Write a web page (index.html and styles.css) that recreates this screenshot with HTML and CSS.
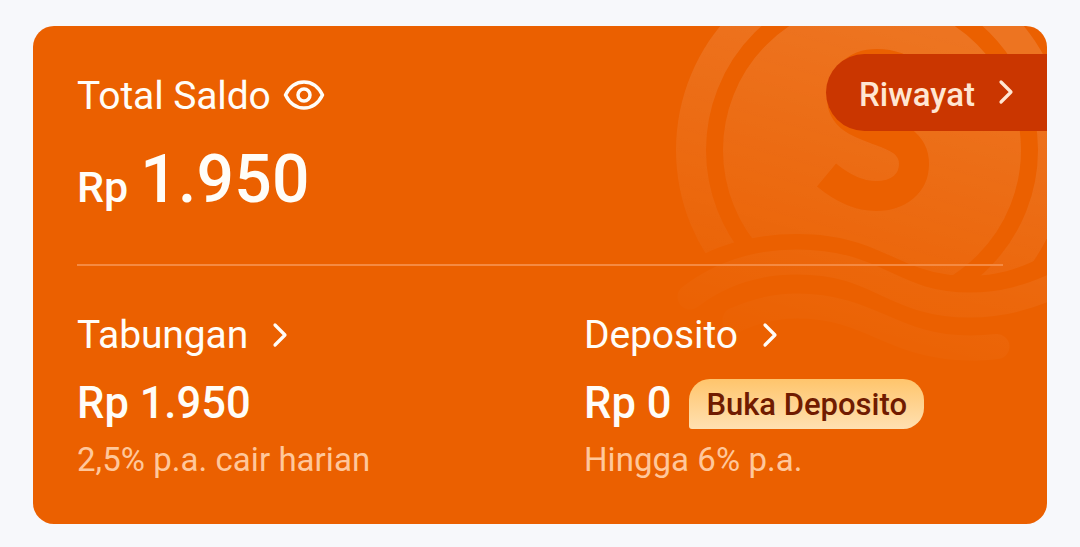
FILE: index.html
```html
<!DOCTYPE html>
<html lang="id">

<head>
    <meta charset="UTF-8">
    <meta name="viewport" content="width=device-width, initial-scale=1.0">
    <title>Total Saldo</title>
    <link rel="stylesheet" href="styles.css">
</head>

<body>
    <main class="card">
        <!-- Coin and waves behind the content -->
        <svg class="card-art" width="400" height="360" viewBox="647 26 400 360" aria-hidden="true">
            <defs>
                <linearGradient id="fade" gradientUnits="userSpaceOnUse" x1="910" y1="26" x2="820" y2="350">
                    <stop offset="0" stop-color="#fff" stop-opacity="0.13" />
                    <stop offset="1" stop-color="#fff" stop-opacity="0.01" />
                </linearGradient>
                <clipPath id="above-wave">
                    <path d="M647 0 V284 L704 254 C732 240 766 234 797 234 C883 234 898 276 970 276 C1002 276 1027 266 1060 248 V0 Z" />
                </clipPath>
                <mask id="coin-mask" maskUnits="userSpaceOnUse" x="647" y="0" width="440" height="386">
                    <rect x="647" y="0" width="440" height="386" fill="#fff" />
                    <circle cx="872" cy="150" r="157.5" fill="none" stroke="#000" stroke-width="17" />
                    <path d="M826.500 175 C841 187 857 196 876 196 C899 196 914 183 914 164 C914 122 842 137 842 98 C842 77 856 64 877 64 C891 64 904 69 915 78" fill="none" stroke="#000" stroke-width="30" />
                </mask>
            </defs>
            <g clip-path="url(#above-wave)">
                <circle cx="872" cy="150" r="196" fill="url(#fade)" mask="url(#coin-mask)" />
            </g>
            <g fill="none" stroke="url(#fade)" stroke-width="25" stroke-linecap="round">
                <path d="M690 297 C721 273 757 262 797 262 C880 262 891 305 970 305 C1003 305 1030 297 1060 283" />
                <path d="M735 320 C755 311 776 306 797 306 C872 306 892 348 970 348 Q985 348 997 346.500" />
            </g>
        </svg>

        <a class="history" href="#">
            <span>Riwayat</span>
            <svg class="chevron" width="16" height="26" viewBox="0 0 16 26"><path d="M3 3 L13 13 L3 23" /></svg>
        </a>

        <section class="total">
            <div class="title">
                <h1>Total Saldo</h1>
                <svg class="eye" width="42" height="32" viewBox="0 0 42 32">
                    <path d="M2.500 16 C6.500 8 13 3 21 3 S35.500 8 39.500 16 C35.500 24 29 29 21 29 S6.500 24 2.500 16 Z" />
                    <circle cx="21" cy="16" r="6" />
                </svg>
            </div>
            <p class="balance"><span class="currency">Rp</span><span class="number">1.950</span></p>
        </section>

        <div class="accounts">
            <section class="account">
                <div class="title">
                    <h2>Tabungan</h2>
                    <svg class="chevron" width="16" height="26" viewBox="0 0 16 26"><path d="M3 3 L13 13 L3 23" /></svg>
                </div>
                <div class="amount">Rp 1.950</div>
                <p class="note">2,5% p.a. cair harian</p>
            </section>
            <section class="account">
                <div class="title">
                    <h2>Deposito</h2>
                    <svg class="chevron" width="16" height="26" viewBox="0 0 16 26"><path d="M3 3 L13 13 L3 23" /></svg>
                </div>
                <div class="amount">Rp 0 <span class="badge">Buka Deposito</span></div>
                <p class="note">Hingga 6% p.a.</p>
            </section>
        </div>
    </main>
</body>

</html>
```
FILE: styles.css
```css
* {
    box-sizing: border-box;
}

body {
    margin: 0;
    padding: 26px 33px 23px;
    background-color: #f7f8fb;
    font-family: Roboto, sans-serif;
    color: #fffdf8;
}

h1,
h2,
p {
    margin: 0;
}

.card {
    position: relative;
    height: 498px;
    padding: 47px 44px 0;
    border-radius: 21px;
    background-color: #eb6000;
    overflow: hidden;
}

/* Decoration in the top right corner */
.card-art {
    position: absolute;
    top: 0;
    right: 0;
}

.history {
    position: absolute;
    top: 28px;
    right: 0;
    display: flex;
    align-items: center;
    width: 221px;
    height: 77px;
    padding: 0 33px;
    justify-content: space-between;
    border-radius: 39px 0 0 39px;
    background-color: #ca3600;
    color: #ffe6d2;
    font-size: 33px;
    font-weight: 500;
    text-decoration: none;
}

.history span {
    padding-top: 4px;
}

.history .chevron {
    margin-bottom: 1px;
}

.total,
.accounts {
    position: relative;
}

.title {
    display: flex;
    align-items: center;
    height: 46px;
}

.title h1,
.title h2 {
    font-size: 39px;
    font-weight: 400;
    line-height: 46px;
    letter-spacing: -0.1px;
}

.eye {
    margin-left: 12px;
    margin-bottom: 2px;
}

.eye,
.chevron {
    fill: none;
    stroke: currentColor;
    stroke-width: 3.5;
    stroke-linecap: round;
    stroke-linejoin: round;
}

.chevron {
    stroke-width: 3.2;
}

.title .chevron {
    margin-left: 24px;
}

.total {
    padding-bottom: 46px;
    border-bottom: 2px solid #f58a42;
}

.balance {
    display: flex;
    align-items: baseline;
    gap: 12px;
    margin-top: 23px;
    height: 76px;
    font-weight: 500;
    line-height: 76px;
    white-space: nowrap;
}

.currency {
    font-size: 43px;
}

.number {
    font-size: 66px;
    letter-spacing: 0.2px;
}

.accounts {
    display: grid;
    grid-template-columns: 507px 1fr;
    padding-top: 46px;
}

.amount {
    display: flex;
    align-items: center;
    gap: 18px;
    height: 50px;
    margin-top: 21px;
    font-size: 43.5px;
    font-weight: 500;
    line-height: 52px;
}

.badge {
    height: 50px;
    padding: 0 17px;
    border-radius: 21px 21px 21px 3px;
    background: linear-gradient(#ffc56c, #ffe0b1);
    color: #701b00;
    font-size: 31px;
    line-height: 52px;
}

.note {
    margin-top: 11px;
    color: #ffc79b;
    font-size: 33px;
    line-height: 40px;
    letter-spacing: 0.05px;
}
```
